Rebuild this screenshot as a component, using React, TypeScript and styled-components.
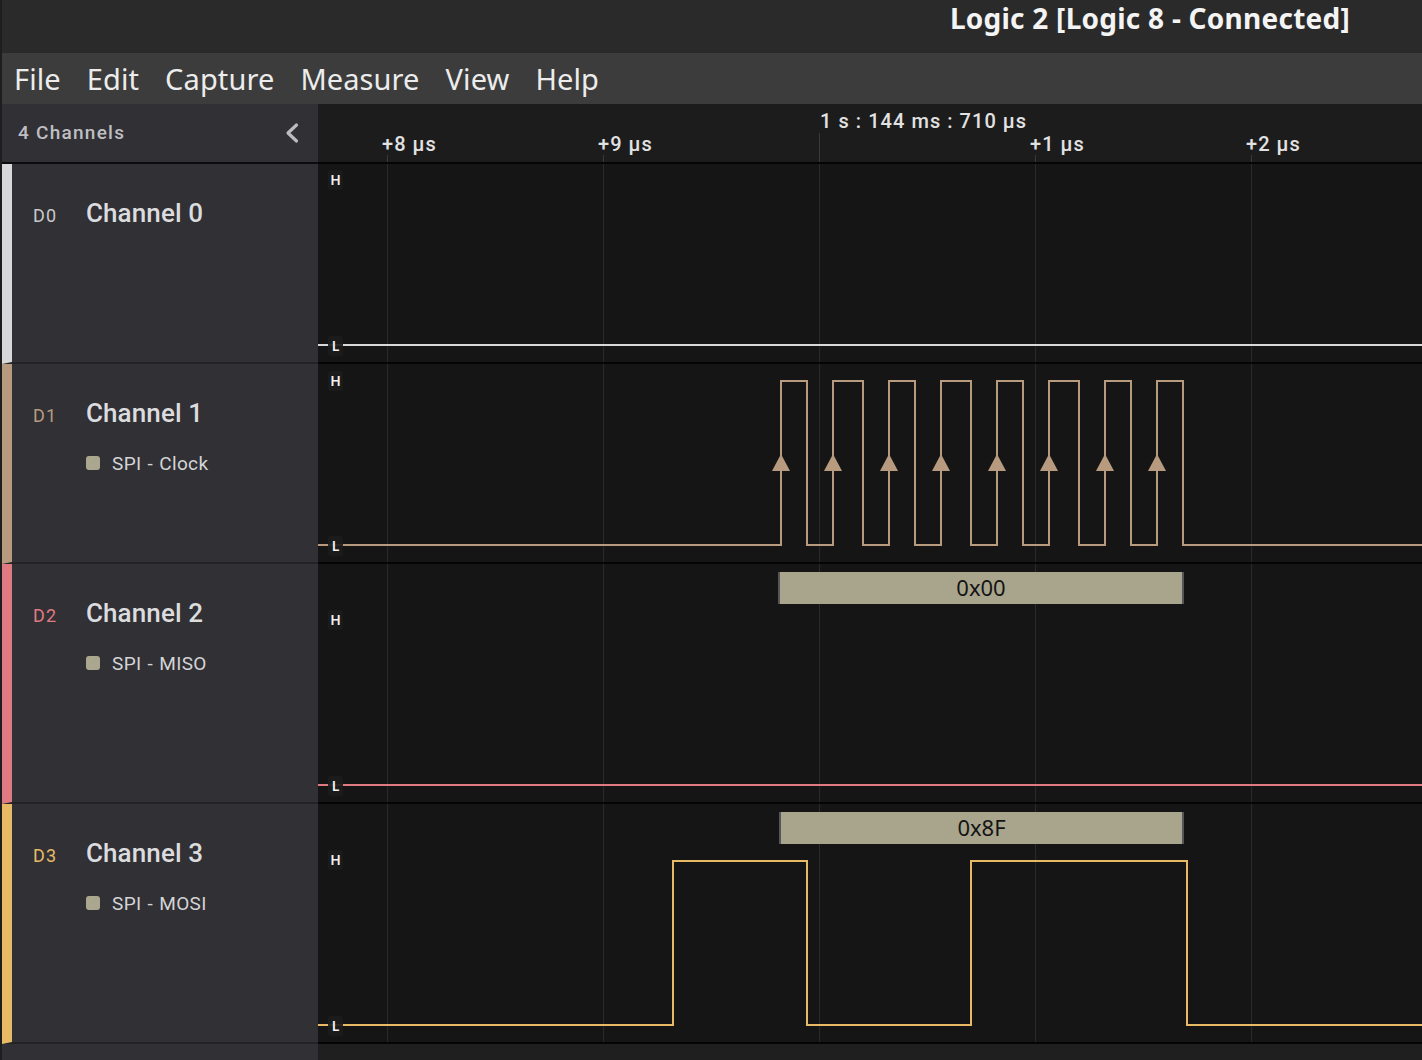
import React from "react";
import styled, { createGlobalStyle } from "styled-components";

const Global = createGlobalStyle`
  html, body { margin: 0; padding: 0; background: #151515; }
  body { width: 1422px; height: 1060px; overflow: hidden; }
  * { box-sizing: border-box; }
`;

const WAVE_W = 1104;
const GRID = [69, 285, 501, 717, 933];

const Window = styled.div`
  width: 1422px;
  height: 1060px;
  display: flex;
  flex-direction: column;
  border-left: 2px solid #1e1e1e;
  background: #151515;
`;

const TitleBar = styled.header`
  height: 53px;
  flex: none;
  background: #2a2a2a;
  display: flex;
  align-items: center;
  justify-content: flex-end;
  padding-right: 72px;
`;

const Title = styled.h1`
  margin: 0;
  font-family: "Noto Sans", "Open Sans", sans-serif;
  font-weight: 700;
  font-size: 28px;
  letter-spacing: 0.25px;
  color: #f4f4f4;
  line-height: 34px;
  transform: translateY(-9px);
`;

const MenuBar = styled.nav`
  height: 51px;
  flex: none;
  background: #3c3c3c;
  display: flex;
  align-items: center;
  gap: 26px;
  padding-left: 12px;
`;

const MenuItem = styled.span`
  font-family: "Noto Sans", "Open Sans", sans-serif;
  font-size: 29px;
  letter-spacing: 0.1px;
  color: #ececec;
  line-height: 34px;
`;

const Workspace = styled.div`
  flex: 1;
  display: grid;
  grid-template-columns: 316px ${WAVE_W}px;
  grid-auto-rows: auto;
  align-content: start;
`;

const SidebarHeader = styled.div`
  height: 60px;
  background: #303035;
  border-bottom: 2px solid #0c0c0c;
  display: flex;
  align-items: center;
  justify-content: space-between;
  padding: 0 19px 0 16px;
`;

const SidebarTitle = styled.span`
  font-family: Roboto, "Liberation Sans", sans-serif;
  font-weight: 500;
  font-size: 19px;
  letter-spacing: 1.25px;
  color: #bfbfc2;
  transform: translateY(-1px);
`;

const Ruler = styled.div`
  position: relative;
  height: 60px;
  background: #1c1c1c;
  border-bottom: 2px solid #050505;
`;

const RulerSvg = styled.svg`
  display: block;
  width: 100%;
  height: 58px;
`;

const TickLabel = styled.span<{ $top: number }>`
  position: absolute;
  top: ${(p) => p.$top}px;
  font-family: Roboto, "Liberation Sans", sans-serif;
  font-weight: 500;
  font-size: 20px;
  line-height: 22px;
  letter-spacing: 1.05px;
  color: #e2e2e2;
  white-space: nowrap;
`;

const ChannelInfo = styled.div<{ $color: string; $h: number }>`
  height: ${(p) => p.$h}px;
  background: #303035;
  border-left: 10px solid ${(p) => p.$color};
  border-bottom: 2px solid #232326;
  padding: 36px 0 0 21px;
`;

const InfoHead = styled.div`
  display: grid;
  grid-template-columns: 53px 1fr;
  align-items: baseline;
`;

const ChannelId = styled.span<{ $color: string }>`
  font-family: Roboto, "Liberation Sans", sans-serif;
  font-size: 18px;
  letter-spacing: 1.2px;
  color: ${(p) => p.$color};
`;

const ChannelName = styled.span`
  font-family: Roboto, "Liberation Sans", sans-serif;
  font-weight: 500;
  font-size: 26px;
  line-height: 27px;
  letter-spacing: 0.1px;
  color: #dcdcde;
`;

const Analyzer = styled.div`
  margin: 26px 0 0 53px;
  display: flex;
  align-items: center;
  gap: 12px;
  height: 20px;
`;

const Swatch = styled.span`
  width: 14px;
  height: 14px;
  border-radius: 3px;
  background: #aba78f;
  flex: none;
`;

const AnalyzerName = styled.span`
  font-family: Roboto, "Liberation Sans", sans-serif;
  font-size: 19px;
  letter-spacing: 0.35px;
  word-spacing: 1px;
  color: #d4d4d6;
`;

const WaveRow = styled.div<{ $h: number }>`
  position: relative;
  height: ${(p) => p.$h}px;
  background: #151515;
  border-bottom: 2px solid #050505;
`;

const WaveSvg = styled.svg`
  display: block;
  width: 100%;
  height: 100%;
`;

const LevelTag = styled.span<{ $y: number }>`
  position: absolute;
  left: 10px;
  top: ${(p) => p.$y - 10}px;
  width: 15px;
  height: 20px;
  border-radius: 3px;
  background: rgba(28, 28, 28, 0.92);
  font-family: "Noto Sans", "Open Sans", sans-serif;
  font-weight: 600;
  font-size: 14px;
  line-height: 20px;
  text-align: center;
  color: #f2f2f2;
`;

const Frame = styled.div<{ $x: number; $w: number }>`
  position: absolute;
  left: ${(p) => p.$x}px;
  top: 8px;
  width: ${(p) => p.$w}px;
  height: 32px;
  background: #a9a58d;
  border-left: 2px solid #55555c;
  border-right: 2px solid #55555c;
  font-family: "Noto Sans", "Open Sans", sans-serif;
  font-size: 22px;
  line-height: 31px;
  text-align: center;
  color: #141414;
`;

const SidebarFoot = styled.div`
  height: 16px;
  background: #303035;
`;

const RulerFoot = styled.div`
  height: 16px;
  background: #1f1f1f;
`;

type Channel = {
  id: string;
  name: string;
  color: string;
  idColor: string;
  h: number;
  analyzer?: string;
  path: string;
  highY: number;
  lowY: number;
  triangles?: number[];
  frame?: { x: number; w: number; text: string };
};

const X0 = 318;
const clockRise = [781, 833, 889, 941, 997, 1049, 1105, 1157].map((v) => v - X0);
const clockFall = [807, 863, 915, 971, 1023, 1079, 1131, 1183].map((v) => v - X0);

function squarePath(edges: number[], startLow: boolean, hi: number, lo: number) {
  let y = startLow ? lo : hi;
  let d = `M0 ${y}`;
  edges.forEach((x) => {
    d += ` H${x}`;
    y = y === lo ? hi : lo;
    d += ` V${y}`;
  });
  d += ` H${WAVE_W}`;
  return d;
}

const clockEdges: number[] = [];
clockRise.forEach((r, i) => {
  clockEdges.push(r, clockFall[i]);
});

const channels: Channel[] = [
  {
    id: "D0",
    name: "Channel 0",
    color: "#d8d8d8",
    idColor: "#c9c9cc",
    h: 200,
    path: `M0 181 H${WAVE_W}`,
    highY: 16,
    lowY: 182,
  },
  {
    id: "D1",
    name: "Channel 1",
    color: "#b89b7f",
    idColor: "#b89b7f",
    h: 200,
    analyzer: "SPI - Clock",
    path: squarePath(clockEdges, true, 17, 181),
    highY: 17,
    lowY: 182,
    triangles: clockRise,
  },
  {
    id: "D2",
    name: "Channel 2",
    color: "#e07a82",
    idColor: "#e07a82",
    h: 240,
    analyzer: "SPI - MISO",
    path: `M0 221 H${WAVE_W}`,
    highY: 56,
    lowY: 222,
    frame: { x: 460, w: 406, text: "0x00" },
  },
  {
    id: "D3",
    name: "Channel 3",
    color: "#e8ba65",
    idColor: "#e8ba65",
    h: 240,
    analyzer: "SPI - MOSI",
    path: squarePath([673 - X0, 807 - X0, 971 - X0, 1187 - X0], true, 57, 221),
    highY: 56,
    lowY: 222,
    frame: { x: 461, w: 405, text: "0x8F" },
  },
];

const ticks = [
  { x: 69, label: "+8 µs" },
  { x: 285, label: "+9 µs" },
  { x: 717, label: "+1 µs" },
  { x: 933, label: "+2 µs" },
];

export default function App() {
  return (
    <>
      <Global />
      <Window>
        <TitleBar>
          <Title>Logic 2 [Logic 8 - Connected]</Title>
        </TitleBar>
        <MenuBar>
          {["File", "Edit", "Capture", "Measure", "View", "Help"].map((m) => (
            <MenuItem key={m}>{m}</MenuItem>
          ))}
        </MenuBar>
        <Workspace>
          <SidebarHeader>
            <SidebarTitle>4 Channels</SidebarTitle>
            <svg width="14" height="22" viewBox="0 0 14 22">
              <polyline
                points="11.5,3 3,11 11.5,19"
                fill="none"
                stroke="#bcbcbf"
                strokeWidth="3.2"
                strokeLinecap="round"
                strokeLinejoin="round"
              />
            </svg>
          </SidebarHeader>
          <Ruler>
            <RulerSvg viewBox={`0 0 ${WAVE_W} 58`}>
              {GRID.map((x) => (
                <line
                  key={x}
                  x1={x + 0.5}
                  x2={x + 0.5}
                  y1={x === 501 ? 29 : 51}
                  y2={58}
                  stroke="#3a3a3a"
                  strokeWidth="1"
                />
              ))}
            </RulerSvg>
            <TickLabel $top={6} style={{ left: 502 }}>
              1 s : 144 ms : 710 µs
            </TickLabel>
            {ticks.map((t) => (
              <TickLabel key={t.label} $top={29} style={{ left: t.x - 5 }}>
                {t.label}
              </TickLabel>
            ))}
          </Ruler>
          {channels.map((ch) => (
            <React.Fragment key={ch.id}>
              <ChannelInfo $color={ch.color} $h={ch.h}>
                <InfoHead>
                  <ChannelId $color={ch.idColor}>{ch.id}</ChannelId>
                  <ChannelName>{ch.name}</ChannelName>
                </InfoHead>
                {ch.analyzer && (
                  <Analyzer>
                    <Swatch />
                    <AnalyzerName>{ch.analyzer}</AnalyzerName>
                  </Analyzer>
                )}
              </ChannelInfo>
              <WaveRow $h={ch.h}>
                <WaveSvg viewBox={`0 0 ${WAVE_W} ${ch.h - 2}`} preserveAspectRatio="none">
                  {GRID.map((x) => (
                    <line
                      key={x}
                      x1={x + 0.5}
                      x2={x + 0.5}
                      y1={0}
                      y2={ch.h - 2}
                      stroke="#2a2a2a"
                      strokeWidth="1"
                    />
                  ))}
                  <path d={ch.path} fill="none" stroke={ch.color} strokeWidth="2" />
                  {ch.triangles?.map((x) => (
                    <polygon
                      key={x}
                      points={`${x},90 ${x - 9},107 ${x + 9},107`}
                      fill={ch.color}
                    />
                  ))}
                </WaveSvg>
                <LevelTag $y={ch.highY}>H</LevelTag>
                <LevelTag $y={ch.lowY}>L</LevelTag>
                {ch.frame && (
                  <Frame $x={ch.frame.x} $w={ch.frame.w}>
                    {ch.frame.text}
                  </Frame>
                )}
              </WaveRow>
            </React.Fragment>
          ))}
          <SidebarFoot />
          <RulerFoot />
        </Workspace>
      </Window>
    </>
  );
}
